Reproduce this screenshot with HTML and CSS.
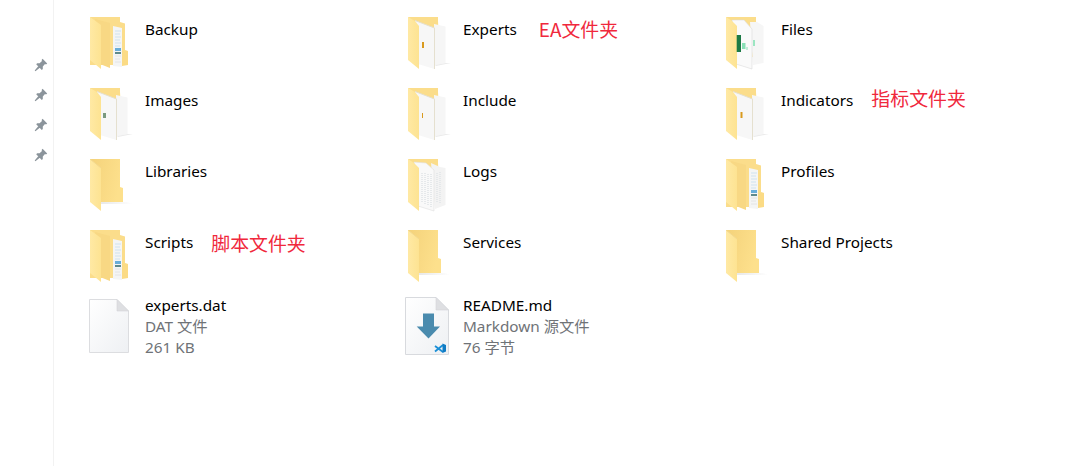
FILE: index.html
```html
<!DOCTYPE html>
<html lang="zh">
<head>
<meta charset="utf-8">
<title>MQL5</title>
<link rel="stylesheet" href="styles.css">
</head>
<body>
<svg class="defs" aria-hidden="true">
  <defs>
    <linearGradient id="gBack" x1="0" y1="0" x2="1" y2="0.3">
      <stop offset="0" stop-color="#f4d27a"/><stop offset="1" stop-color="#fde08c"/>
    </linearGradient>
    <linearGradient id="gFlap" x1="0" y1="0" x2="1" y2="0">
      <stop offset="0" stop-color="#ffe9a4"/><stop offset="1" stop-color="#fde392"/>
    </linearGradient>
    <linearGradient id="gFile" x1="0" y1="0" x2="1" y2="1">
      <stop offset="0" stop-color="#ffffff"/><stop offset="1" stop-color="#eef0f3"/>
    </linearGradient>
    <linearGradient id="gShadow" x1="0" y1="0" x2="1" y2="0">
      <stop offset="0" stop-color="#e8e8e8"/><stop offset="1" stop-color="#ffffff"/>
    </linearGradient>
    <symbol id="folder-plain" viewBox="0 0 56 60">
      <path d="M12 43H38L44 45H12Z" fill="url(#gShadow)"/>
      <path d="M1 0H31V28L34 29V43H12Z" fill="url(#gBack)"/>
      <path d="M1 0L12 9V52L1 43Z" fill="url(#gFlap)"/>
      <path d="M1 0L12 9" stroke="#f2d88f" fill="none"/>
    </symbol>
    <symbol id="folder-stack" viewBox="0 0 56 60">
      <path d="M1 0H31V5L36 6.500V33L39 34V48H1Z" fill="#fbdd8b"/>
      <path d="M24 9L33 11V50L24 49Z" fill="#f4f5f5"/>
      <path d="M26 14H32M26 17H31M26 20H32M26 23H31M26 26H32M26 29H31" stroke="#cfe2ef" stroke-width="1"/>
      <path d="M26 31h6v3h-6z" fill="#6aaed9"/>
      <path d="M26 35h6v2h-6z" fill="#5f8a8c"/>
      <path d="M26 39H32M26 42H31M26 45H32" stroke="#e4e4e4" stroke-width="1"/>
      <path d="M6 2L21 6V51L11 47Z" fill="#f8d884"/>
      <path d="M1 0L12 8V52L1 43Z" fill="url(#gFlap)"/>
      <path d="M33 33.500L39 34V48L33 49Z" fill="#fbdb85"/>
    </symbol>
    <symbol id="folder-doc" viewBox="0 0 56 60">
      <path d="M1 0H31V4L33 40H12Z" fill="#fbdd8b"/>
      <path d="M27 7L38.500 9.500V46L28 48Z" fill="#f6f6f6"/>
      <path d="M28 48L38.500 46L44 46L29 49Z" fill="#ececec"/>
      <path d="M8 3.500L27.500 11V52L11 47Z" fill="#f7f7f7"/>
      <path d="M8 3.500L27.500 11V52" fill="none" stroke="#e5e0cf"/>
      <path d="M1 0L8 4L12 9V52L1 43Z" fill="url(#gFlap)"/>
    </symbol>
    <symbol id="folder-files" viewBox="0 0 56 60">
      <path d="M1 0H31V4L33 40H12Z" fill="#fbdd8b"/>
      <path d="M25 5L32 5L38.500 9V46L28 48Z" fill="#f6f6f6"/>
      <path d="M7 3L19 3L27 12V52L11 47Z" fill="#fafafa" stroke="#dcdcdc" stroke-width=".6"/>
      <path d="M1 0L7 4L12 9V52L1 43Z" fill="url(#gFlap)"/>
      <path d="M11.700 18h4.300v17h-4.300z" fill="#1c7a45"/>
      <path d="M17 26h3.500v6h-3.500zM21.500 30h1v3h-1z" fill="#8ae0b6"/>
      <path d="M28 23h2v6h-2z" fill="#9ce6c2"/>
    </symbol>
    <symbol id="folder-logs" viewBox="0 0 56 60">
      <path d="M1 0H31V4L33 40H12Z" fill="#fbdd8b"/>
      <path d="M24 4L33 8L38.500 9V46L28 50Z" fill="#f3f3f3"/>
      <path d="M7 3L19 4L27 11V52L11 47Z" fill="#f9f9f9" stroke="#dfdfdf" stroke-width=".6"/>
      <path d="M15 14V44M18 14V46M21 15V47M24 15V48M30 14V44M33 13V45" stroke="#e2e5e8" stroke-width="1.600" stroke-dasharray="1 1" fill="none"/>
      <path d="M1 0L7 4L12 9V52L1 43Z" fill="url(#gFlap)"/>
    </symbol>
  </defs>
</svg>
<div class="layout">
  <aside class="pins">
    <svg class="pin" viewBox="0 0 14 14"><path d="M8.600.8L13.200 5.400 12 6.400 11 6 8.800 8.600 8.800 11 7.800 12 2.200 6.200 3.200 5.200 5.600 5.200 8 3 7.600 2Z M4.200 8.200L5.800 9.800 1.400 13.200.7 12.600Z"/></svg>
    <svg class="pin" viewBox="0 0 14 14"><path d="M8.600.8L13.200 5.400 12 6.400 11 6 8.800 8.600 8.800 11 7.800 12 2.200 6.200 3.200 5.200 5.600 5.200 8 3 7.600 2Z M4.200 8.200L5.800 9.800 1.400 13.200.7 12.600Z"/></svg>
    <svg class="pin" viewBox="0 0 14 14"><path d="M8.600.8L13.200 5.400 12 6.400 11 6 8.800 8.600 8.800 11 7.800 12 2.200 6.200 3.200 5.200 5.600 5.200 8 3 7.600 2Z M4.200 8.200L5.800 9.800 1.400 13.200.7 12.600Z"/></svg>
    <svg class="pin" viewBox="0 0 14 14"><path d="M8.600.8L13.200 5.400 12 6.400 11 6 8.800 8.600 8.800 11 7.800 12 2.200 6.200 3.200 5.200 5.600 5.200 8 3 7.600 2Z M4.200 8.200L5.800 9.800 1.400 13.200.7 12.600Z"/></svg>
  </aside>
  <main class="content">
    <div class="grid folders">
      <div class="item"><svg class="icon"><use href="#folder-stack"/></svg><span class="name">Backup</span></div>
      <div class="item"><svg class="icon"><use href="#folder-doc"/><path class="mark" d="M15 25h2v6h-2z"/></svg><span class="name">Experts</span><span class="note note-ea">EA文件夹</span></div>
      <div class="item"><svg class="icon"><use href="#folder-files"/></svg><span class="name">Files</span></div>

      <div class="item"><svg class="icon"><use href="#folder-doc"/><path d="M14 25h3v5h-3z" fill="#7a9a80"/></svg><span class="name">Images</span></div>
      <div class="item"><svg class="icon"><use href="#folder-doc"/><path class="mark" d="M15 25h1v5h-1z"/></svg><span class="name">Include</span></div>
      <div class="item"><svg class="icon"><use href="#folder-doc"/><path class="mark" d="M15.500 24h2v6h-2z"/></svg><span class="name">Indicators</span><span class="note note-ind">指标文件夹</span></div>

      <div class="item"><svg class="icon"><use href="#folder-plain"/></svg><span class="name">Libraries</span></div>
      <div class="item"><svg class="icon"><use href="#folder-logs"/></svg><span class="name">Logs</span></div>
      <div class="item"><svg class="icon"><use href="#folder-stack"/></svg><span class="name">Profiles</span></div>

      <div class="item"><svg class="icon"><use href="#folder-stack"/></svg><span class="name">Scripts</span><span class="note note-scr">脚本文件夹</span></div>
      <div class="item"><svg class="icon"><use href="#folder-plain"/></svg><span class="name">Services</span></div>
      <div class="item"><svg class="icon"><use href="#folder-plain"/></svg><span class="name">Shared Projects</span></div>
    </div>
    <div class="grid files">
      <div class="item">
        <svg class="icon file-icon" viewBox="0 0 56 60">
          <path d="M.5.500H28L39.500 12V53.500H.5Z" fill="url(#gFile)" stroke="#dcdde0"/>
          <path d="M28 .5V12H39.500Z" fill="#dedfe2" stroke="#d4d5d8" stroke-width=".6"/>
        </svg>
        <div class="meta"><span class="name">experts.dat</span><span class="sub">DAT 文件</span><span class="sub">261 KB</span></div>
      </div>
      <div class="item">
        <svg class="icon file-icon readme" viewBox="0 0 56 60">
          <path d="M.5.500H31L43.500 13V57.500H.5Z" fill="url(#gFile)" stroke="#d8dade"/>
          <path d="M31 .5V13H43.500Z" fill="#dedfe2" stroke="#d4d5d8" stroke-width=".6"/>
          <path d="M18 16.500H29V29.500H35L23.500 41.500 11.700 29.500H18Z" fill="#4a8bae"/>
          <path d="M30 49L38 55M30 54.500L38 48" stroke="#1c8fd6" stroke-width="1.800" fill="none"/>
          <path d="M37.500 46.500L41 48V54.500L37.500 56Z" fill="#0f7bc4"/>
        </svg>
        <div class="meta"><span class="name">README.md</span><span class="sub">Markdown 源文件</span><span class="sub">76 字节</span></div>
      </div>
    </div>
  </main>
</div>
</body>
</html>
```
FILE: styles.css
```css
* { box-sizing: border-box; }
html, body { margin: 0; height: 100%; background: #fff; overflow: hidden; }
body { font-family: "Noto Sans", "Noto Sans CJK SC", sans-serif; font-size: 15.3px; line-height: 21px; color: #000; }
.defs { position: absolute; width: 0; height: 0; }
.layout { display: flex; height: 466px; }
.pins { width: 54px; flex: none; border-right: 1px solid #f2f2f2; padding: 58px 0 0 34px; display: flex; flex-direction: column; gap: 16px; }
.pin { width: 14px; height: 14px; fill: #8b949b; }
.content { flex: 1; padding: 17px 0 0 35px; }
.grid { display: grid; grid-template-columns: repeat(3, 318px); }
.folders { grid-auto-rows: 65px; row-gap: 6px; }
.item { display: flex; align-items: flex-start; }
.icon { width: 56px; height: 60px; flex: none; overflow: visible; }
.folders .name { padding-top: 2px; }
.mark { fill: #d99a1e; }
.name { display: block; white-space: nowrap; }
.note { color: #f0283c; font-family: "Noto Sans CJK SC", sans-serif; font-size: 18.9px; line-height: 24px; white-space: nowrap; }
.note-ea { margin: 0 0 0 22px; }
.note-ind { margin: -2px 0 0 18px; }
.note-scr { margin: 1px 0 0 18px; }
.file-icon { margin-top: 4px; }
.readme { margin: 2px 0 0; transform: translateX(-2px); }
.meta { display: flex; flex-direction: column; }
.sub { color: #6f7377; }
```
